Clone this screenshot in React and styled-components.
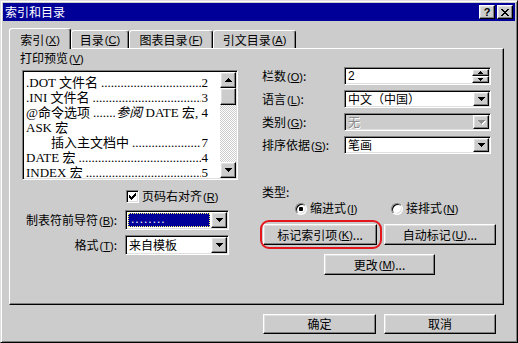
import React from 'react';
import styled, { createGlobalStyle, css } from 'styled-components';

const GlobalStyle = createGlobalStyle`
  html, body {
    margin: 0;
    padding: 0;
    background: #cccccc;
  }
  body {
    font-family: "Noto Sans CJK SC", "Liberation Sans", sans-serif;
    font-size: 12px;
    color: #000;
  }
  * {
    box-sizing: border-box;
  }
`;

const raised = css`
  border: 1px solid;
  border-color: #fff #000 #000 #fff;
  box-shadow: inset -1px -1px #808080, inset 1px 1px #dfdfdf;
  background: #cccccc;
`;

const sunken = css`
  border: 1px solid;
  border-color: #808080 #fff #fff #808080;
  box-shadow: inset 1px 1px #000, inset -1px -1px #dfdfdf;
`;

const Mn = ({ k }) => (
  <Key>
    (<u>{k}</u>)
  </Key>
);

const DownArrow = ({ color = '#000' }) => (
  <svg width="7" height="4" viewBox="0 0 7 4">
    <path d="M0 0h7v1H0z M1 1h5v1H1z M2 2h3v1H2z M3 3h1v1H3z" fill={color} />
  </svg>
);

const UpArrow = () => (
  <svg width="7" height="4" viewBox="0 0 7 4">
    <path d="M3 0h1v1H3z M2 1h3v1H2z M1 2h5v1H1z M0 3h7v1H0z" fill="#000" />
  </svg>
);

const SpinUp = () => (
  <svg width="5" height="3" viewBox="0 0 5 3">
    <path d="M2 0h1v1H2z M1 1h3v1H1z M0 2h5v1H0z" fill="#000" />
  </svg>
);

const SpinDown = () => (
  <svg width="5" height="3" viewBox="0 0 5 3">
    <path d="M0 0h5v1H0z M1 1h3v1H1z M2 2h1v1H2z" fill="#000" />
  </svg>
);

const CloseIcon = () => (
  <svg width="8" height="7" viewBox="0 0 8 7">
    <path
      d="M0 0h2v1H0z M6 0h2v1H6z M1 1h2v1H1z M5 1h2v1H5z M2 2h4v1H2z M3 3h2v1H3z M2 4h4v1H2z M1 5h2v1H1z M5 5h2v1H5z M0 6h2v1H0z M6 6h2v1H6z"
      fill="#000"
    />
  </svg>
);

const CheckMark = () => (
  <svg width="7" height="7" viewBox="0 0 7 7">
    <path
      d="M6 0h1v1H6z M5 1h2v1H5z M0 2h1v1H0z M4 2h3v1H4z M0 3h2v1H0z M3 3h3v1H3z M0 4h5v1H0z M1 5h3v1H1z M2 6h1v1H2z"
      fill="#000"
    />
  </svg>
);

const previewRows = [
  { text: '.DOT 文件名', page: '2' },
  { text: '.INI 文件名', page: '3' },
  { text: '@命令选项', page: (<><i>参阅</i> DATE 宏, 4</>) },
  { text: 'ASK 宏' },
  { text: '插入主文档中', page: '7', indent: 25 },
  { text: 'DATE 宏', page: '4' },
  { text: 'INDEX 宏', page: '5' },
];

export default function App() {
  return (
    <>
      <GlobalStyle />
      <Window>
        <TitleBar>
          <TitleText>索引和目录</TitleText>
          <TitleButtons>
            <TitleButton>
              <Question>?</Question>
            </TitleButton>
            <TitleButton>
              <CloseIcon />
            </TitleButton>
          </TitleButtons>
        </TitleBar>

        <Body>
          <TabRow>
            <Tab $active $w={62}>索引<Mn k="X" /></Tab>
            <Tab $w={58}>目录<Mn k="C" /></Tab>
            <Tab $w={84}>图表目录<Mn k="F" /></Tab>
            <Tab $w={83}>引文目录<Mn k="A" /></Tab>
          </TabRow>

          <Panel>
            <LeftCol>
              <Label>打印预览<Mn k="V" /></Label>
              <ListBox>
                <ListContent>
                  {previewRows.map((row, i) => (
                    <ListRow key={i} $indent={row.indent || 0}>
                      <span>{row.text}</span>
                      {row.page && <Leader />}
                      {row.page && <span>{row.page}</span>}
                    </ListRow>
                  ))}
                </ListContent>
                <Scrollbar>
                  <ScrollButton><UpArrow /></ScrollButton>
                  <ScrollThumb />
                  <ScrollTrack />
                  <ScrollButton><DownArrow /></ScrollButton>
                </Scrollbar>
              </ListBox>

              <CheckRow>
                <CheckBox><CheckMark /></CheckBox>
                <Label>页码右对齐<Mn k="R" /></Label>
              </CheckRow>

              <LeftGrid>
                <GridLabel>制表符前导符<Mn k="B" />:</GridLabel>
                <Field $h={20}>
                  <Selected>........</Selected>
                  <DropButton><DownArrow /></DropButton>
                </Field>
                <GridLabel>格式<Mn k="T" />:</GridLabel>
                <Field $h={20}>
                  <FieldText>来自模板</FieldText>
                  <DropButton><DownArrow /></DropButton>
                </Field>
              </LeftGrid>
            </LeftCol>

            <RightCol>
              <RightGrid>
                <Label>栏数<Mn k="O" />:</Label>
                <Field $h={18}>
                  <FieldText $latin>2</FieldText>
                  <Spin>
                    <SpinHalf><SpinUp /></SpinHalf>
                    <SpinHalf><SpinDown /></SpinHalf>
                  </Spin>
                </Field>

                <Label>语言<Mn k="L" />:</Label>
                <Field $h={18}>
                  <FieldText>中文（中国）</FieldText>
                  <DropButton><DownArrow /></DropButton>
                </Field>

                <Label>类别<Mn k="G" />:</Label>
                <Field $h={18} $disabled>
                  <FieldText $disabled>无</FieldText>
                  <DropButton $disabled><DownArrow color="#8c8c8c" /></DropButton>
                </Field>

                <Label>排序依据<Mn k="S" />:</Label>
                <Field $h={18}>
                  <FieldText>笔画</FieldText>
                  <DropButton><DownArrow /></DropButton>
                </Field>
              </RightGrid>

              <TypeLabel>类型:</TypeLabel>
              <RadioRow>
                <RadioOption $w={96}>
                  <Radio $checked />
                  <Label>缩进式<Mn k="I" /></Label>
                </RadioOption>
                <RadioOption>
                  <Radio />
                  <Label>接排式<Mn k="N" /></Label>
                </RadioOption>
              </RadioRow>

              <ButtonRow>
                <MarkButton $w={114} $h={21}>标记索引项<Mn k="K" />...</MarkButton>
                <Button $w={112} $h={21}>自动标记<Mn k="U" />...</Button>
              </ButtonRow>
              <ChangeButton $w={111} $h={21}>更改<Mn k="M" />...</ChangeButton>
            </RightCol>
          </Panel>

          <Footer>
            <Button $w={113} $h={20}>确定</Button>
            <Button $w={112} $h={20}>取消</Button>
          </Footer>
        </Body>
      </Window>
    </>
  );
}

const Window = styled.div`
  width: 518px;
  height: 343px;
  background: #cccccc;
  border: 1px solid;
  border-color: #dfdfdf #000 #000 #dfdfdf;
  box-shadow: inset 1px 1px #fff, inset -1px -1px #808080;
  padding: 2px;
  display: flex;
  flex-direction: column;
`;

const TitleBar = styled.div`
  height: 18px;
  background: #000099;
  display: flex;
  align-items: center;
  justify-content: space-between;
  padding: 0 2px;
`;

const TitleText = styled.span`
  color: #fff;
  font-size: 12px;
  line-height: 14px;
`;

const TitleButtons = styled.div`
  display: flex;
  gap: 2px;
`;

const TitleButton = styled.div`
  ${raised};
  width: 16px;
  height: 14px;
  display: flex;
  align-items: center;
  justify-content: center;
`;

const Question = styled.span`
  font-family: "Liberation Sans", sans-serif;
  font-weight: bold;
  font-size: 11px;
  line-height: 11px;
`;

const Body = styled.div`
  padding: 0 6px;
  display: flex;
  flex-direction: column;
`;

const TabRow = styled.div`
  display: flex;
  align-items: flex-end;
  height: 20px;
  margin-top: 7px;
`;

const Tab = styled.div`
  position: relative;
  z-index: ${(p) => (p.$active ? 1 : 0)};
  width: ${(p) => p.$w}px;
  height: ${(p) => (p.$active ? 21 : 18)}px;
  margin-bottom: ${(p) => (p.$active ? -1 : 0)}px;
  padding-top: ${(p) => (p.$active ? 1 : 0)}px;
  background: #cccccc;
  border-top: 1px solid #fff;
  border-left: 1px solid #fff;
  border-right: 1px solid #000;
  border-radius: 3px 3px 0 0;
  box-shadow: inset -1px 0 #808080;
  display: flex;
  align-items: center;
  justify-content: center;
  font-size: 12px;
  line-height: 14px;
  white-space: nowrap;
`;

const Key = styled.span`
  font-family: "Liberation Sans", sans-serif;
  font-size: 11px;
  margin-left: 1px;
  u {
    text-underline-offset: 1px;
  }
`;

const Panel = styled.div`
  width: 495px;
  height: 257px;
  border: 1px solid;
  border-color: #fff #000 #000 #fff;
  box-shadow: inset -1px -1px #808080;
  display: flex;
`;

const LeftCol = styled.div`
  width: 242px;
  padding: 2px 0 0 10px;
  display: flex;
  flex-direction: column;
  align-items: flex-start;
`;

const RightCol = styled.div`
  flex: 1;
  padding: 18px 0 0 10px;
  display: flex;
  flex-direction: column;
  align-items: flex-start;
`;

const Label = styled.span`
  font-size: 12px;
  line-height: 14px;
  white-space: nowrap;
`;

const ListBox = styled.div`
  ${sunken};
  margin: 4px 0 0 2px;
  width: 216px;
  height: 110px;
  padding: 1px;
  display: flex;
`;

const ListContent = styled.div`
  flex: 1;
  background: #fff;
  overflow: hidden;
  padding: 3px 12px 0 2px;
`;

const ListRow = styled.div`
  display: flex;
  height: 15px;
  line-height: 15px;
  padding-left: ${(p) => p.$indent}px;
  font-family: "Liberation Serif", "Noto Sans CJK SC", serif;
  font-size: 13px;
  white-space: nowrap;

  i {
    font-style: italic;
  }
`;

const Leader = styled.span`
  flex: 1;
  overflow: hidden;
  margin: 0 1px 0 3px;
  &::before {
    content: "${'.'.repeat(90)}";
  }
`;

const Scrollbar = styled.div`
  width: 16px;
  display: flex;
  flex-direction: column;
`;

const ScrollButton = styled.div`
  ${raised};
  height: 16px;
  display: flex;
  align-items: center;
  justify-content: center;
`;

const ScrollThumb = styled.div`
  ${raised};
  height: 17px;
`;

const ScrollTrack = styled.div`
  flex: 1;
  background-color: #fff;
  background-image: repeating-conic-gradient(#cccccc 0% 25%, #fff 0% 50%);
  background-size: 2px 2px;
`;

const CheckRow = styled.div`
  margin: 10px 0 0 106px;
  height: 13px;
  display: flex;
  align-items: center;
  gap: 3px;
`;

const CheckBox = styled.div`
  ${sunken};
  width: 13px;
  height: 13px;
  background: #fff;
  display: flex;
  align-items: center;
  justify-content: center;
`;

const LeftGrid = styled.div`
  margin-top: 7px;
  display: grid;
  grid-template-columns: 97px 104px;
  grid-auto-rows: 20px;
  column-gap: 8px;
  row-gap: 5px;
  align-items: center;
`;

const GridLabel = styled(Label)`
  justify-self: end;
`;

const Field = styled.div`
  ${sunken};
  height: ${(p) => p.$h}px;
  padding: 1px;
  display: flex;
  align-items: center;
  background: ${(p) => (p.$disabled ? '#cccccc' : '#fff')};
`;

const FieldText = styled.span`
  flex: 1;
  padding-left: 2px;
  font-family: ${(p) => (p.$latin ? '"Liberation Sans", sans-serif' : '"Noto Sans CJK SC", sans-serif')};
  font-size: 12px;
  line-height: 14px;
  color: ${(p) => (p.$disabled ? '#8c8c8c' : '#000')};
  text-shadow: ${(p) => (p.$disabled ? '1px 1px #fff' : 'none')};
  white-space: nowrap;
`;

const Selected = styled.span`
  flex: 1;
  align-self: stretch;
  margin: 1px;
  padding-left: 3px;
  background: #000099;
  color: #fff;
  outline: 1px dotted #ffff66;
  outline-offset: -1px;
  font-family: "Liberation Sans", sans-serif;
  font-size: 12px;
  line-height: 12px;
  letter-spacing: 1px;
`;

const DropButton = styled.div`
  ${raised};
  width: 16px;
  align-self: stretch;
  display: flex;
  align-items: center;
  justify-content: center;
  svg {
    filter: ${(p) => (p.$disabled ? 'drop-shadow(1px 1px 0 #fff)' : 'none')};
  }
`;

const Spin = styled.div`
  width: 17px;
  align-self: stretch;
  display: flex;
  flex-direction: column;
`;

const SpinHalf = styled.div`
  ${raised};
  flex: 1;
  display: flex;
  align-items: center;
  justify-content: center;
`;

const RightGrid = styled.div`
  display: grid;
  grid-template-columns: 82px 147px;
  grid-auto-rows: 18px;
  row-gap: 5px;
  align-items: center;
`;

const TypeLabel = styled(Label)`
  margin-top: 31px;
`;

const RadioRow = styled.div`
  margin: 3px 0 0 33px;
  height: 13px;
  display: flex;
  align-items: center;
`;

const RadioOption = styled.div`
  display: flex;
  align-items: center;
  gap: 3px;
  width: ${(p) => (p.$w ? `${p.$w}px` : 'auto')};
`;

const Radio = styled.div`
  position: relative;
  width: 12px;
  height: 12px;
  border-radius: 50%;
  background: #fff;
  border: 1px solid;
  border-color: #808080 #fff #fff #808080;
  box-shadow: inset 1px 1px #000, inset -1px -1px #dfdfdf;
  &::after {
    content: "";
    display: ${(p) => (p.$checked ? 'block' : 'none')};
    position: absolute;
    left: 3px;
    top: 3px;
    width: 4px;
    height: 4px;
    border-radius: 1px;
    background: #000;
  }
`;

const ButtonRow = styled.div`
  margin: 9px 0 0 1px;
  display: flex;
  gap: 7px;
`;

const Button = styled.div`
  ${raised};
  width: ${(p) => p.$w}px;
  height: ${(p) => p.$h}px;
  display: flex;
  align-items: center;
  justify-content: center;
  font-size: 12px;
  line-height: 14px;
  white-space: nowrap;
`;

const MarkButton = styled(Button)`
  position: relative;
  &::after {
    content: "";
    position: absolute;
    left: -4px;
    right: -6px;
    top: -5px;
    bottom: -5px;
    border: 2px solid #e3171d;
    border-radius: 9px;
    pointer-events: none;
  }
`;

const ChangeButton = styled(Button)`
  margin: 9px 0 0 62px;
`;

const Footer = styled.div`
  margin-top: 9px;
  padding-right: 13px;
  display: flex;
  justify-content: flex-end;
  gap: 8px;
`;
